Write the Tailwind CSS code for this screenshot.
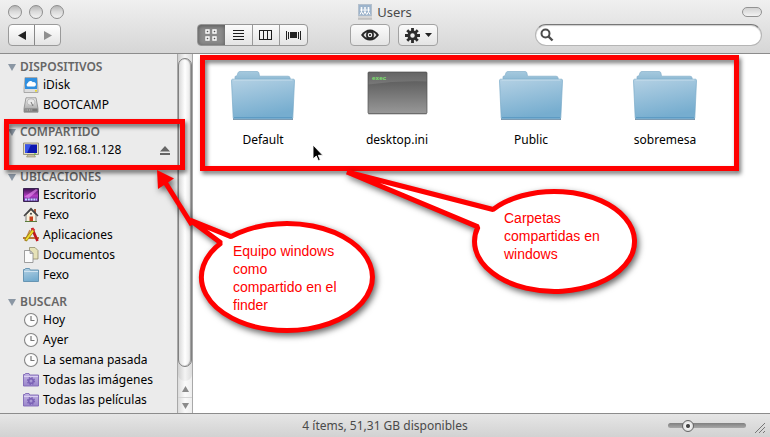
<!DOCTYPE html>
<html lang="es">
<head>
<meta charset="utf-8">
<title>Users</title>
<script src="https://cdn.jsdelivr.net/npm/@tailwindcss/browser@4"></script>
</head>
<body class="relative flex h-screen flex-col overflow-hidden bg-white font-['Noto_Sans','Open_Sans',sans-serif] text-xs text-black">

<svg class="absolute h-0 w-0" aria-hidden="true">
  <defs>
    <linearGradient id="gFolder" x1="0" y1="0" x2="0.3" y2="1"><stop offset="0" stop-color="#b4d1e4"/><stop offset="1" stop-color="#76adcf"/></linearGradient>
    <linearGradient id="gTab" x1="0" y1="0" x2="0" y2="1"><stop offset="0" stop-color="#a5c9de"/><stop offset="1" stop-color="#86b4d0"/></linearGradient>
    <linearGradient id="gTerm" x1="0" y1="0" x2="0" y2="1"><stop offset="0" stop-color="#505050"/><stop offset="1" stop-color="#989898"/></linearGradient>
    <linearGradient id="gPurple" x1="0" y1="0" x2="0" y2="1"><stop offset="0" stop-color="#c3b5e3"/><stop offset="1" stop-color="#9a86cb"/></linearGradient>
    <linearGradient id="gNight" x1="0" y1="0" x2="0" y2="1"><stop offset="0" stop-color="#3a1050"/><stop offset=".55" stop-color="#b23cc0"/><stop offset="1" stop-color="#5a2f9a"/></linearGradient>
    <linearGradient id="gMetal" x1="0" y1="0" x2="0" y2="1"><stop offset="0" stop-color="#f0f0f0"/><stop offset="1" stop-color="#9a9a9a"/></linearGradient>
    <symbol id="folder" viewBox="0 0 64 50">
      <path d="M2 47h60v2H2z" fill="#55708a" opacity=".75"/>
      <path d="M4 10V5.500l2-.8L7 1.800Q7.500.500 9 .500h17q1.600 0 1.900 1.500l.6 3.200H57q2 0 2.200 2V12H4z" fill="url(#gTab)" stroke="#86b0cb" stroke-width=".7"/>
      <path d="M1.500 8.200h61q1.200.2 1 1.500L61.800 47q-.1 1-1.200 1H3.400q-1 0-1.200-1L.5 9.700Q.4 8.400 1.500 8.200z" fill="url(#gFolder)" stroke="#7aabc9" stroke-width=".7"/>
      <path d="M2.500 9h59" stroke="#cfe3f0" stroke-width=".8"/>
      <path d="M3 46.500h58" stroke="#5d9bc4" stroke-width="1"/>
    </symbol>
    <symbol id="clock" viewBox="0 0 16 16">
      <circle cx="8" cy="8" r="6.500" fill="#fcfcfc" stroke="#858585" stroke-width="1.100"/>
      <path d="M8 4v4.500h3.500" fill="none" stroke="#777" stroke-width="1.200"/>
    </symbol>
    <symbol id="smart" viewBox="0 0 16 16">
      <path d="M.5 4V2.500H2l.5-1h3.500l.7 1.500h8.800V14H.5z" fill="url(#gPurple)" stroke="#7f68b5" stroke-width=".9"/>
      <path d="M1 4.500h14" stroke="#d9cff0"/>
      <circle cx="8" cy="9" r="2.300" fill="none" stroke="#7a61b5" stroke-width="1.600"/>
      <circle cx="8" cy="9" r="3.500" fill="none" stroke="#7a61b5" stroke-width="1.200" stroke-dasharray="1.400 1.350"/>
    </symbol>
    <symbol id="tri" viewBox="0 0 8 7"><path d="M0 0h8L4 7z" fill="#8b97a4"/></symbol>
  </defs>
</svg>

<header class="flex h-[54px] shrink-0 flex-col border-b border-[#8c8c8c] bg-linear-to-b from-[#f0f0f0] to-[#d6d6d6]">
  <div class="flex h-6 items-center px-2">
    <div class="flex flex-1 gap-[7px]">
      <button aria-label="Cerrar" class="size-3.5 rounded-full border border-[#8e8e8e] bg-linear-to-b from-[#b5b5b5] via-[#dcdcdc] to-[#f2f2f2]"></button>
      <button aria-label="Minimizar" class="size-3.5 rounded-full border border-[#8e8e8e] bg-linear-to-b from-[#b5b5b5] via-[#dcdcdc] to-[#f2f2f2]"></button>
      <button aria-label="Zoom" class="size-3.5 rounded-full border border-[#8e8e8e] bg-linear-to-b from-[#b5b5b5] via-[#dcdcdc] to-[#f2f2f2]"></button>
    </div>
    <h1 class="flex items-center gap-[5px] text-[13px] leading-4 text-[#4a4a4a]">
      <svg class="h-4 w-3.5" viewBox="0 0 14 16" aria-hidden="true">
        <rect x=".5" y=".5" width="13" height="11.500" fill="#9db4cc" stroke="#b5c0cc"/>
        <path d="M0 12h14v3H0z" fill="#d5d5d5"/><path d="M0 15h14" stroke="#aaa"/>
        <g stroke="#fff" stroke-width="1" fill="none"><path d="M3.500 5v2.500L2 10.500M3.500 7.500l1.500 3M2 6h10M7 5v2.500l-1.500 3M7 7.500l1.500 3M10.500 5v2.500l-1.500 3M10.500 7.500l1.500 3"/></g>
        <g fill="#fff"><circle cx="3.500" cy="4" r="1"/><circle cx="7" cy="4" r="1"/><circle cx="10.500" cy="4" r="1"/></g>
      </svg>
      Users
    </h1>
    <div class="flex flex-1 justify-end">
      <button aria-label="Ocultar barra" class="h-2.5 w-5 rounded-full border border-[#929292] bg-linear-to-b from-[#d2d2d2] to-[#f2f2f2]"></button>
    </div>
  </div>

  <div class="flex items-center px-2">
    <div class="flex h-[22px] w-[53px] rounded border border-[#9a9a9a] bg-linear-to-b from-white to-[#e4e4e4]">
      <button aria-label="Atrás" class="flex flex-1 items-center justify-center border-r border-[#888]"><svg class="ml-px h-[9px] w-2" viewBox="0 0 8 9"><path d="M8 0v9L0 4.500z" fill="#222"/></svg></button>
      <button aria-label="Adelante" class="flex flex-1 items-center justify-center"><svg class="h-[9px] w-2" viewBox="0 0 8 9"><path d="M0 0v9l8-4.500z" fill="#8f8f8f"/></svg></button>
    </div>

    <div class="ml-[136px] flex h-[22px] w-[111px] rounded border border-[#969696] bg-linear-to-b from-[#fbfbfb] to-[#e4e4e4]">
      <button aria-label="Iconos" class="flex flex-1 items-center justify-center rounded-l-[3px] bg-[#8b8b8b] shadow-[inset_0_1px_4px_#555]">
        <svg class="size-3" viewBox="0 0 12 12" fill="#555" stroke="#fff" stroke-width="1.400"><path d="M1 1h3v3H1zM8 1h3v3H8zM1 8h3v3H1zM8 8h3v3H8z"/></svg>
      </button>
      <button aria-label="Lista" class="flex flex-1 items-center justify-center border-r border-[#999]">
        <svg class="h-[11px] w-[11px]" viewBox="0 0 11 11" shape-rendering="crispEdges" stroke="#1c1c1c"><path d="M0 .5h11M0 3.500h11M0 6.500h11M0 9.500h11"/></svg>
      </button>
      <button aria-label="Columnas" class="flex flex-1 items-center justify-center border-r border-[#999]">
        <svg class="h-[11px] w-[13px]" viewBox="0 0 13 11" shape-rendering="crispEdges" fill="none" stroke="#1c1c1c"><path d="M.5.500h12v9H.5zM4.500 0v10M8.500 0v10"/></svg>
      </button>
      <button aria-label="Cover Flow" class="flex flex-1 items-center justify-center">
        <svg class="h-[9px] w-[15px]" viewBox="0 0 15 9" shape-rendering="crispEdges" stroke="#222"><path d="M.5 0v9M2.500 1v7M12.500 1v7M14.500 0v9"/><path d="M4 1h7v6H4z" fill="#222" stroke="none"/></svg>
      </button>
    </div>

    <button aria-label="Vista rápida" class="ml-[42px] flex h-[22px] w-10 items-center justify-center rounded border border-[#a2a2a2] bg-linear-to-b from-[#fbfbfb] to-[#e4e4e4]">
      <svg class="h-3 w-[18px]" viewBox="0 0 18 12"><path d="M0 6Q4 .5 9 .5T18 6Q14 11.500 9 11.500T0 6z" fill="#262626"/><path d="M2.500 6Q4 4 5.500 3.300 4.600 6 5.500 8.700 4 8 2.500 6zM15.500 6Q14 4 12.500 3.300 13.400 6 12.500 8.700 14 8 15.500 6z" fill="#ddd"/><circle cx="9" cy="6" r="1.700" fill="none" stroke="#eee" stroke-width="1.200"/></svg>
    </button>

    <button aria-label="Acciones" class="ml-2 flex h-[22px] w-10 items-center justify-center gap-[5px] rounded border border-[#a2a2a2] bg-linear-to-b from-[#fbfbfb] to-[#e4e4e4]">
      <svg class="size-[15px] shrink-0" viewBox="-8 -8 16 16"><g stroke="#2c2c2c" stroke-width="3"><path d="M0-8V-4M0 8V4M-8 0H-4M8 0H4M-5.600-5.600l2.800 2.800M5.600 5.600L2.800 2.800M-5.600 5.600l2.800-2.800M5.600-5.600L2.800-2.800"/></g><circle r="3.900" fill="none" stroke="#2c2c2c" stroke-width="3"/></svg>
      <svg class="h-1 w-[7px] shrink-0" viewBox="0 0 7 4"><path d="M0 0h7L3.500 4z" fill="#222"/></svg>
    </button>

    <div class="ml-auto flex h-[22px] w-[227px] items-center rounded-full border border-[#b5b5b5] border-t-[#777] bg-white pl-1 shadow-[inset_0_1px_1px_#ccc]">
      <svg class="size-3.5 shrink-0" viewBox="0 0 14 14" fill="none" stroke="#4c4c4c" aria-hidden="true"><circle cx="5.500" cy="5.500" r="4" stroke-width="2"/><path d="M8.500 8.500l4 4" stroke-width="2.400"/></svg>
      <input type="search" aria-label="Buscar" class="min-w-0 flex-1 bg-transparent px-1 outline-none">
    </div>
  </div>
</header>

<main class="flex min-h-0 flex-1">
  <nav class="flex w-[177px] shrink-0 flex-col gap-[9px] overflow-hidden bg-[#ebebeb] pt-[5px] leading-4">
    <section class="shrink-0">
      <h2 class="flex h-4 items-center gap-1 pl-2 font-semibold text-[#666]"><svg class="h-[7px] w-2"><use href="#tri"/></svg>DISPOSITIVOS</h2>
      <ul>
        <li><a href="#" class="flex h-5 items-center gap-1 pl-[23px]"><svg class="size-4" viewBox="0 0 16 16"><path d="M2 .5h12l1 12v3H1v-3z" fill="#ddd" stroke="#999" stroke-width=".8"/><path d="M2 1h12v11H2z" fill="#2f8fe0"/><path d="M4.500 9.500a2 2 0 0 1 .3-3.500 2.800 2.800 0 0 1 5-.8A2.200 2.200 0 0 1 11.500 9.500z" fill="#fff"/><path d="M12 13.200h2v1.200h-2z" fill="#e8d400"/></svg>iDisk</a></li>
        <li><a href="#" class="flex h-5 items-center gap-1 pl-[23px]"><svg class="size-4" viewBox="0 0 16 16"><path d="M3 .8h10l2 10.700v3.700H1v-3.700z" fill="url(#gMetal)" stroke="#888" stroke-width=".8"/><ellipse cx="8" cy="5" rx="4" ry="3.300" fill="#e8e8e8" stroke="#aaa" stroke-width=".7"/><path d="M8 5l2 4" stroke="#777"/><path d="M1.500 11.500h13v3h-13z" fill="#777"/><path d="M2.500 13h7" stroke="#ddd" stroke-width="1.200" stroke-dasharray="1 .7"/></svg>BOOTCAMP</a></li>
      </ul>
    </section>
    <section class="shrink-0">
      <h2 class="flex h-4 items-center gap-1 pl-2 font-semibold text-[#666]"><svg class="h-[7px] w-2"><use href="#tri"/></svg>COMPARTIDO</h2>
      <ul>
        <li class="flex h-5 items-center pr-[7px]"><a href="#" class="flex flex-1 items-center gap-1 pl-[23px]"><svg class="size-4" viewBox="0 0 16 16"><path d="M.5 1h15v11.500H.5z" fill="#e3dcc0" stroke="#8a8468" stroke-width=".8"/><path d="M2 2.500h12v8.500H2z" fill="#0c16b0"/><path d="M2 2.500h6L4 11H2z" fill="#3a55e8"/><path d="M5 12.500h6l1.500 2.500h-9z" fill="#c9c19f" stroke="#8a8468" stroke-width=".6"/><path d="M11 12h2" stroke="#5b3"/></svg>192.168.1.128</a>
          <button aria-label="Expulsar"><svg class="h-[11px] w-2.5" viewBox="0 0 10 11"><path d="M5 1l5 5.500H0zM0 8h10v2H0z" fill="#666"/></svg></button></li>
      </ul>
    </section>
    <section class="shrink-0">
      <h2 class="flex h-4 items-center gap-1 pl-2 font-semibold text-[#666]"><svg class="h-[7px] w-2"><use href="#tri"/></svg>UBICACIONES</h2>
      <ul>
        <li><a href="#" class="flex h-5 items-center gap-1 pl-[23px]"><svg class="size-4" viewBox="0 0 16 16"><path d="M.5 1.500h15v13H.5z" fill="url(#gNight)" stroke="#3a2450"/><path d="M1 10L13 2l2 1-9 8z" fill="#e68af0" opacity=".65"/><path d="M2 12.500h12" stroke="#bcd8ff" stroke-width="2" stroke-dasharray="2 .8"/></svg>Escritorio</a></li>
        <li><a href="#" class="flex h-5 items-center gap-1 pl-[23px]"><svg class="size-4" viewBox="0 0 16 16"><path d="M3 8l5-5 5 5v6.500H3z" fill="#f6f0dd" stroke="#666" stroke-width=".8"/><path d="M11 2h2v4h-2z" fill="#a55a3a"/><path d="M1 9l7-7.300L15 9" fill="none" stroke="#444" stroke-width="1.500"/><path d="M6.500 9.500h3.500v5H6.500z" fill="#c8401c"/><circle cx="8" cy="6.700" r="1" fill="#444"/><path d="M2 14.500h12" stroke="#5a7a3a"/></svg>Fexo</a></li>
        <li><a href="#" class="flex h-5 items-center gap-1 pl-[23px]"><svg class="size-4" viewBox="0 0 16 16" fill="none"><path d="M0 11h16" stroke="#b9783c" stroke-width="2"/><path d="M7 3L2 14M9 3l4 9" stroke="#c98a4c" stroke-width="1.600"/><path d="M9 1l5.500 13" stroke="#c0141e" stroke-width="2.600"/><path d="M10.500 3L2.500 13.500" stroke="#8a7a10" stroke-width="3"/><path d="M10.500 3L3 13" stroke="#f2d92c" stroke-width="2"/><path d="M9.500 1.500l2 2" stroke="#d33" stroke-width="2"/></svg>Aplicaciones</a></li>
        <li><a href="#" class="flex h-5 items-center gap-1 pl-[23px]"><svg class="size-4" viewBox="0 0 16 16"><path d="M6.500.500h5.500l3 3V12H6.500z" fill="#e6e2b8" stroke="#8f8c6a" stroke-width=".8"/><path d="M1.500 3.500H7l3 3v9H1.500z" fill="#fbfbfb" stroke="#888" stroke-width=".8"/><path d="M7 3.500v3h3z" fill="#ccc" stroke="#888" stroke-width=".6"/></svg>Documentos</a></li>
        <li><a href="#" class="flex h-5 items-center gap-1 pl-[23px]"><svg class="size-4" viewBox="0 0 16 16"><path d="M.5 4V2.500H2l.5-1h4l.7 1.500h8.300V14.500H.5z" fill="url(#gFolder)" stroke="#5f8fae" stroke-width=".9"/><path d="M1 4.500h14" stroke="#cfe3f0"/></svg>Fexo</a></li>
      </ul>
    </section>
    <section class="shrink-0">
      <h2 class="flex h-4 items-center gap-1 pl-2 font-semibold text-[#666]"><svg class="h-[7px] w-2"><use href="#tri"/></svg>BUSCAR</h2>
      <ul>
        <li><a href="#" class="flex h-5 items-center gap-1 pl-[23px]"><svg class="size-4"><use href="#clock"/></svg>Hoy</a></li>
        <li><a href="#" class="flex h-5 items-center gap-1 pl-[23px]"><svg class="size-4"><use href="#clock"/></svg>Ayer</a></li>
        <li><a href="#" class="flex h-5 items-center gap-1 pl-[23px]"><svg class="size-4"><use href="#clock"/></svg>La semana pasada</a></li>
        <li><a href="#" class="flex h-5 items-center gap-1 pl-[23px]"><svg class="size-4"><use href="#smart"/></svg>Todas las imágenes</a></li>
        <li><a href="#" class="flex h-5 items-center gap-1 pl-[23px]"><svg class="size-4"><use href="#smart"/></svg>Todas las películas</a></li>
        <li><a href="#" aria-label="Búsqueda guardada" class="flex h-5 items-center gap-1 pl-[23px]"><svg class="size-4"><use href="#smart"/></svg></a></li>
      </ul>
    </section>
  </nav>

  <div class="flex w-4 shrink-0 flex-col border-x border-[#a8a8a8] bg-linear-to-r from-[#dcdcdc] via-[#fafafa] to-[#eee]" aria-hidden="true">
    <div class="flex-1 rounded-b-full bg-linear-to-r from-[#cfcfcf] via-[#f4f4f4] to-[#dcdcdc] pt-1 pb-3.5">
      <div class="h-full rounded-full border border-[#808080] bg-linear-to-r from-[#dadada] via-white to-[#e4e4e4] shadow-[inset_-1px_0_1px_#999]"></div>
    </div>
    <div class="flex h-4 items-center justify-center"><svg class="h-1.5 w-[7px]" viewBox="0 0 7 6"><path d="M3.500 0L7 6H0z" fill="#8a8a8a"/></svg></div>
    <div class="flex h-4 items-center justify-center border-t border-[#d5d5d5]"><svg class="h-1.5 w-[7px]" viewBox="0 0 7 6"><path d="M3.500 6L7 0H0z" fill="#8a8a8a"/></svg></div>
  </div>

  <ul class="flex flex-1 flex-wrap content-start bg-white pt-[17px] pl-[3px]">
    <li class="flex w-[134px] flex-col items-center gap-[11px]"><svg class="h-[50px] w-16"><use href="#folder"/></svg><span class="leading-4">Default</span></li>
    <li class="flex w-[134px] flex-col items-center gap-[11px]">
      <svg class="h-[50px] w-16" viewBox="0 0 64 50"><rect x="3" y="1.500" width="59" height="42" rx="1" fill="#aaa"/><rect x="3" y="1" width="59" height="41.500" rx="1" fill="url(#gTerm)" stroke="#555" stroke-width=".7"/><path d="M3.500 1.500h58v9q-29-1-58 3z" fill="#fff" opacity=".12"/><text x="7" y="9" fill="#7be36c" font-family="Liberation Mono" font-weight="bold" font-size="6">exec</text></svg>
      <span class="leading-4">desktop.ini</span></li>
    <li class="flex w-[134px] flex-col items-center gap-[11px]"><svg class="h-[50px] w-16"><use href="#folder"/></svg><span class="leading-4">Public</span></li>
    <li class="flex w-[134px] flex-col items-center gap-[11px]"><svg class="h-[50px] w-16"><use href="#folder"/></svg><span class="leading-4">sobremesa</span></li>
  </ul>
</main>

<footer class="flex h-6 shrink-0 items-center border-t border-[#8c8c8c] bg-linear-to-b from-[#e6e6e6] to-[#d2d2d2] px-1">
  <div class="flex-1"></div>
  <p class="leading-4 text-[#4a4a4a]">4 ítems, 51,31 GB disponibles</p>
  <div class="flex flex-1 items-center justify-end gap-2">
    <input type="range" aria-label="Tamaño de icono" min="0" max="100" value="21" class="h-3 w-[78px] appearance-none bg-transparent [&::-webkit-slider-runnable-track]:h-[5px] [&::-webkit-slider-runnable-track]:rounded-full [&::-webkit-slider-runnable-track]:bg-linear-to-b [&::-webkit-slider-runnable-track]:from-[#808080] [&::-webkit-slider-runnable-track]:to-[#a8a8a8] [&::-webkit-slider-thumb]:-mt-[3px] [&::-webkit-slider-thumb]:size-3 [&::-webkit-slider-thumb]:appearance-none [&::-webkit-slider-thumb]:rounded-full [&::-webkit-slider-thumb]:border [&::-webkit-slider-thumb]:border-[#666] [&::-webkit-slider-thumb]:bg-[radial-gradient(circle,#444_0_1.5px,#f4f4f4_2.5px,#ccc)]">
    <svg class="mt-1 size-3" viewBox="0 0 12 12" stroke="#777" aria-hidden="true"><path d="M1 11L11 1M5 11l6-6M9 11l2-2"/></svg>
  </div>
</footer>

<div class="pointer-events-none absolute top-0 left-0 h-[437px] w-[770px]">
  <div class="absolute top-[119px] left-1 h-[51px] w-[181px] border-[5px] border-[#f00] drop-shadow-[2px_3px_2px_#0008]"></div>
  <div class="absolute top-[55px] left-[200px] h-[116px] w-[539px] border-[5px] border-[#f00] drop-shadow-[2px_3px_2px_#0008]"></div>
  <svg class="absolute inset-0 h-full w-full" viewBox="0 0 770 437" aria-hidden="true">
    <g class="drop-shadow-[2px_3px_3px_#0009]" stroke="#f00" stroke-width="5" fill="#fff">
      <path d="M231 236.600L190 220 221 243A85.500 53.500 0 1 0 231 236.600z" stroke-linejoin="bevel"/>
      <path d="M493 209.500L347 172 478 226.900A80 50 0 1 0 493 209.500z" stroke-linejoin="bevel"/>
      <path d="M192 225L165 182" fill="none"/>
      <path d="M157 170L174 178.500 158 189z" fill="#f00" stroke="none"/>
    </g>
    <path d="M313 145v14l3.300-3 2 4.700 2-.9-2-4.500h4.500z" fill="#000" stroke="#fff" stroke-width=".9"/>
  </svg>
  <p class="absolute top-[242px] left-[233px] w-[106px] font-['Liberation_Sans',sans-serif] text-sm leading-[18px] text-[#f00]">Equipo windows como compartido en el finder</p>
  <p class="absolute top-[209px] left-[504px] w-[106px] font-['Liberation_Sans',sans-serif] text-sm leading-[18px] text-[#f00]">Carpetas compartidas en windows</p>
</div>
</body>
</html>
